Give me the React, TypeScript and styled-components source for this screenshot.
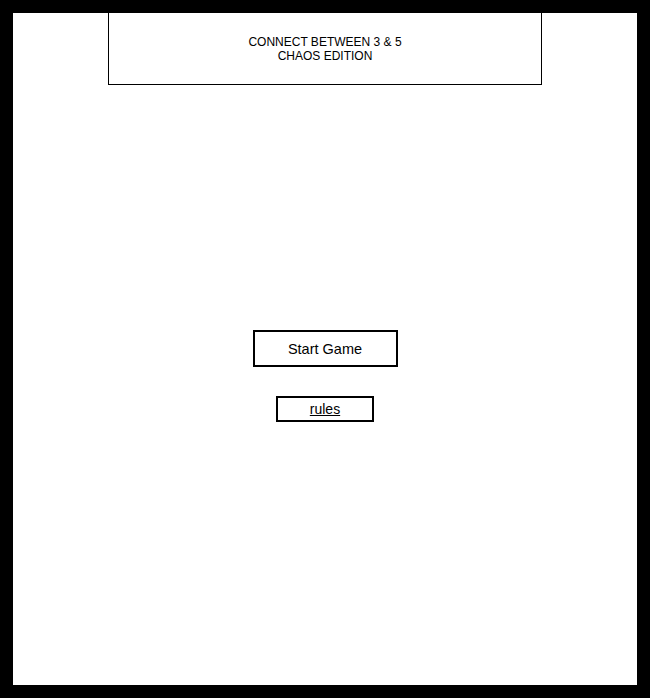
import React from "react";
import styled, { createGlobalStyle } from "styled-components";

const Global = createGlobalStyle`
  html, body {
    margin: 0;
    padding: 0;
    background: #000;
  }
  * { box-sizing: border-box; }
`;

const Frame = styled.div`
  width: 650px;
  height: 698px;
  border: 13px solid #000;
  background: #fff;
  display: flex;
  flex-direction: column;
  align-items: center;
  font-family: "Liberation Sans", Arial, sans-serif;
  color: #000;
`;

const TitleBox = styled.header`
  width: 434px;
  height: 72px;
  border: 1px solid #000;
  border-top: none;
  display: flex;
  flex-direction: column;
  align-items: center;
  justify-content: center;
  font-size: 12px;
  line-height: 14px;
  text-align: center;
`;

const Menu = styled.main`
  margin-top: 245px;
  display: flex;
  flex-direction: column;
  align-items: center;
  gap: 29px;
`;

const MenuButton = styled.button<{ $w: number; $h: number; $size: number; $underline?: boolean }>`
  width: ${(p) => p.$w}px;
  height: ${(p) => p.$h}px;
  border: 2px solid #000;
  background: #fff;
  color: #000;
  padding: 0;
  font-family: "Liberation Sans", Arial, sans-serif;
  font-size: ${(p) => p.$size}px;
  text-decoration: ${(p) => (p.$underline ? "underline" : "none")};
  cursor: pointer;
`;

export default function App() {
  return (
    <>
      <Global />
      <Frame>
        <TitleBox>
          <div>CONNECT BETWEEN 3 &amp; 5</div>
          <div>CHAOS EDITION</div>
        </TitleBox>
        <Menu>
          <MenuButton $w={145} $h={37} $size={14.5}>Start Game</MenuButton>
          <MenuButton $w={98} $h={26} $size={14} $underline>rules</MenuButton>
        </Menu>
      </Frame>
    </>
  );
}
